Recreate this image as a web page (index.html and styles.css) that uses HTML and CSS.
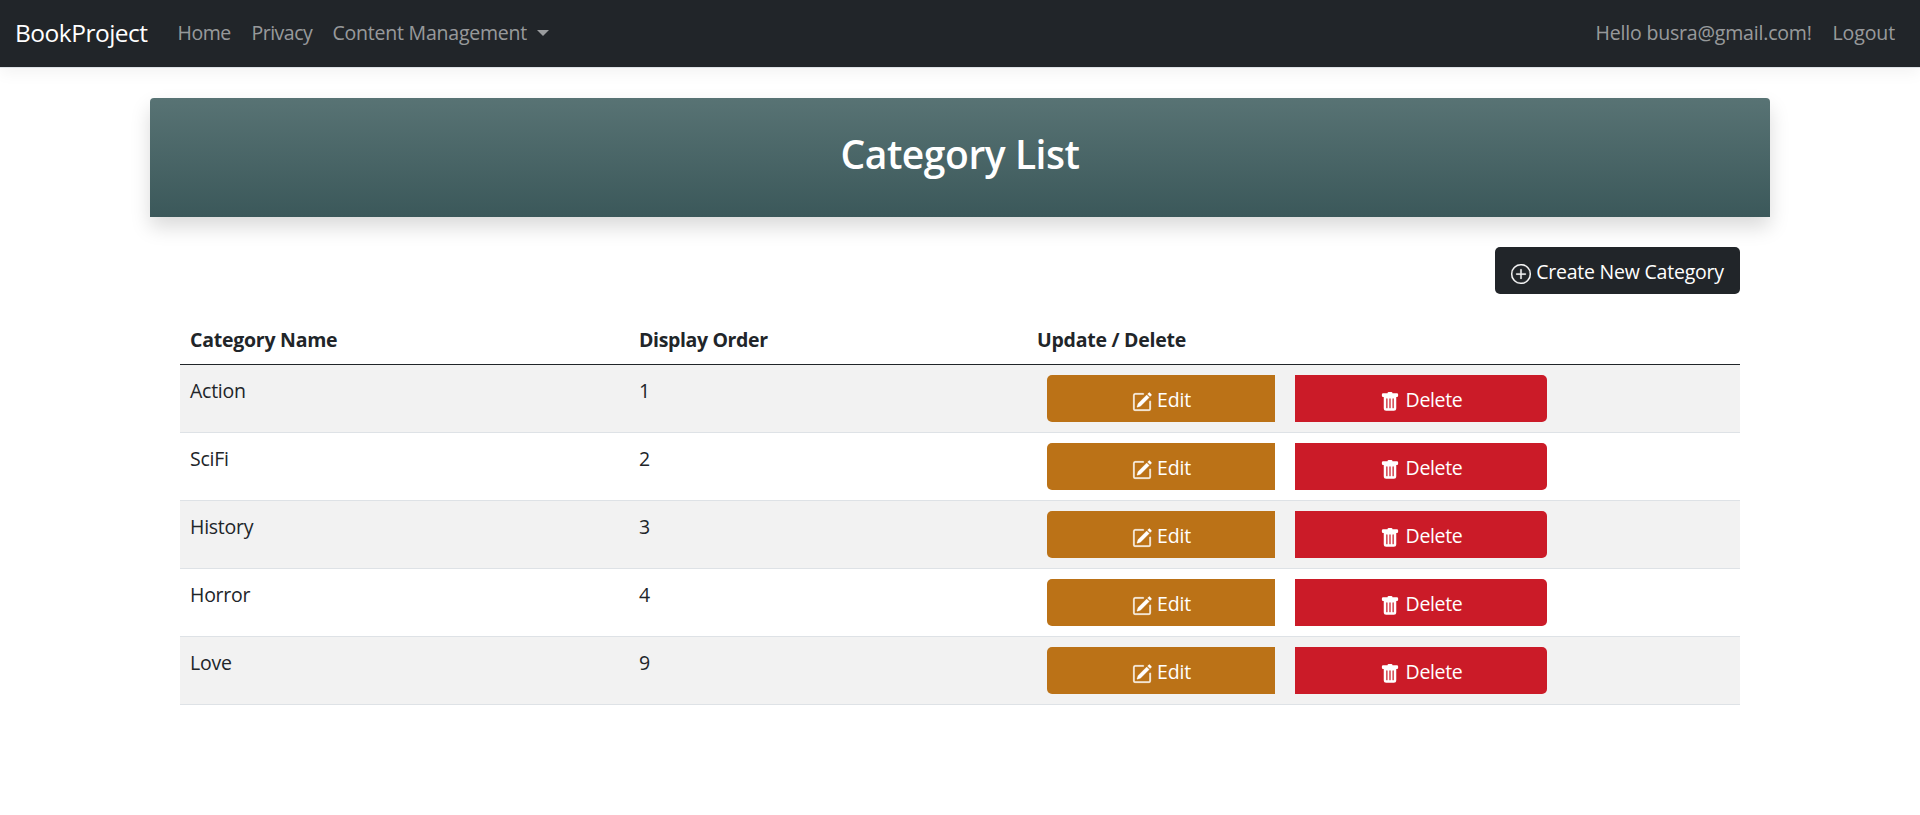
FILE: index.html
```html
<!DOCTYPE html>
<html lang="en">
<head>
<meta charset="utf-8">
<title>Category List - BookProject</title>
<link rel="stylesheet" href="styles.css">
</head>
<body>
<svg class="sprite" aria-hidden="true">
  <symbol id="plus-circle" viewBox="0 0 16 16">
    <path d="M8 15A7 7 0 1 1 8 1a7 7 0 0 1 0 14zm0 1A8 8 0 1 0 8 0a8 8 0 0 0 0 16z"/>
    <path d="M8 4a.5.5 0 0 1 .5.5v3h3a.5.5 0 0 1 0 1h-3v3a.5.5 0 0 1-1 0v-3h-3a.5.5 0 0 1 0-1h3v-3A.5.5 0 0 1 8 4z"/>
  </symbol>
  <symbol id="pencil-square" viewBox="0 0 16 16">
    <path d="M15.502 1.94a.5.5 0 0 1 0 .706L14.459 3.69l-2-2L13.502.646a.5.5 0 0 1 .707 0l1.293 1.293zm-1.75 2.456-2-2L4.939 9.21a.5.5 0 0 0-.121.196l-.805 2.414a.25.25 0 0 0 .316.316l2.414-.805a.5.5 0 0 0 .196-.12l6.813-6.814z"/>
    <path fill-rule="evenodd" d="M1 13.5A1.5 1.5 0 0 0 2.5 15h11a1.5 1.5 0 0 0 1.5-1.5v-6a.5.5 0 0 0-1 0v6a.5.5 0 0 1-.5.5h-11a.5.5 0 0 1-.5-.5v-11a.5.5 0 0 1 .5-.5H9a.5.5 0 0 0 0-1H2.5A1.5 1.5 0 0 0 1 2.5v11z"/>
  </symbol>
  <symbol id="trash-fill" viewBox="0 0 16 16">
    <path d="M2.5 1a1 1 0 0 0-1 1v1a1 1 0 0 0 1 1H3v9a2 2 0 0 0 2 2h6a2 2 0 0 0 2-2V4h.5a1 1 0 0 0 1-1V2a1 1 0 0 0-1-1H10a1 1 0 0 0-1-1H7a1 1 0 0 0-1 1H2.5zm3 4a.5.5 0 0 1 .5.5v7a.5.5 0 0 1-1 0v-7a.5.5 0 0 1 .5-.5zM8 5a.5.5 0 0 1 .5.5v7a.5.5 0 0 1-1 0v-7A.5.5 0 0 1 8 5zm3 .5v7a.5.5 0 0 1-1 0v-7a.5.5 0 0 1 1 0z"/>
  </symbol>
</svg>

<nav class="navbar">
  <a class="brand">BookProject</a>
  <a class="nav-link home">Home</a>
  <a class="nav-link privacy">Privacy</a>
  <a class="nav-link content-menu">Content Management<span class="caret"></span></a>
  <a class="nav-link hello">Hello busra@gmail.com!</a>
  <a class="nav-link logout">Logout</a>
</nav>

<main class="container">
  <header class="card-header"><h1>Category List</h1></header>
  <section class="card-body">
    <div class="toolbar">
      <a class="btn btn-create"><svg class="icon icon-line"><use href="#plus-circle"/></svg><span>Create New Category</span></a>
    </div>
    <table class="table">
      <thead>
        <tr><th class="col-name">Category Name</th><th class="col-order">Display Order</th><th class="col-actions">Update / Delete</th></tr>
      </thead>
      <tbody>
        <tr><td>Action</td><td>1</td><td><div class="actions"><a class="btn btn-edit"><svg class="icon icon-line"><use href="#pencil-square"/></svg><span>Edit</span></a><a class="btn btn-delete"><svg class="icon"><use href="#trash-fill"/></svg><span>Delete</span></a></div></td></tr>
        <tr><td>SciFi</td><td>2</td><td><div class="actions"><a class="btn btn-edit"><svg class="icon icon-line"><use href="#pencil-square"/></svg><span>Edit</span></a><a class="btn btn-delete"><svg class="icon"><use href="#trash-fill"/></svg><span>Delete</span></a></div></td></tr>
        <tr><td>History</td><td>3</td><td><div class="actions"><a class="btn btn-edit"><svg class="icon icon-line"><use href="#pencil-square"/></svg><span>Edit</span></a><a class="btn btn-delete"><svg class="icon"><use href="#trash-fill"/></svg><span>Delete</span></a></div></td></tr>
        <tr><td>Horror</td><td>4</td><td><div class="actions"><a class="btn btn-edit"><svg class="icon icon-line"><use href="#pencil-square"/></svg><span>Edit</span></a><a class="btn btn-delete"><svg class="icon"><use href="#trash-fill"/></svg><span>Delete</span></a></div></td></tr>
        <tr><td>Love</td><td>9</td><td><div class="actions"><a class="btn btn-edit"><svg class="icon icon-line"><use href="#pencil-square"/></svg><span>Edit</span></a><a class="btn btn-delete"><svg class="icon"><use href="#trash-fill"/></svg><span>Delete</span></a></div></td></tr>
      </tbody>
    </table>
  </section>
</main>
</body>
</html>
```
FILE: styles.css
```css
* { box-sizing: border-box; }

body {
  margin: 0;
  background: #fff;
  color: #212529;
  font: 400 19.5px/30px "Open Sans", "Noto Sans", sans-serif;
}

.sprite { display: none; }

/* Navigation bar */
.navbar {
  display: flex;
  align-items: center;
  height: 68px;
  padding: 0 15px 1px;
  background: #212529;
  border-bottom: 1px solid #dee2e6;
  box-shadow: 0 5px 15px rgba(0, 0, 0, .05);
}

.brand {
  width: 152px;
  color: #fff;
  font-size: 24.5px;
  letter-spacing: -.5px;
  line-height: 38px;
  white-space: nowrap;
}

.nav-link {
  padding: 0 9.5px 0 10.5px;
  color: rgba(255, 255, 255, .55);
  white-space: nowrap;
}

.home { width: 74px; letter-spacing: -.45px; }
.privacy { width: 81px; letter-spacing: -.5px; }
.content-menu { display: flex; align-items: center; letter-spacing: -.22px; }
.hello { width: 237px; margin-left: auto; letter-spacing: -.18px; }
.logout { width: 83px; letter-spacing: -.1px; }

.caret {
  margin: -1px 0 0 10px;
  border: 6px solid transparent;
  border-top-color: currentColor;
  border-bottom: 0;
}

/* Page card */
.container { width: 1620px; margin: 30px auto 0; }

.card-header {
  height: 119px;
  padding-top: 32px;
  border-radius: 4px 4px 0 0;
  background: linear-gradient(#587374, #3b585a);
  box-shadow: 0 10px 20px rgba(0, 0, 0, .15);
  text-align: center;
}

.card-header h1 {
  margin: 0;
  color: #fff;
  font-size: 39px;
  font-weight: 600;
  letter-spacing: -.45px;
  line-height: 48px;
}

.card-body { padding: 30px; }

.toolbar { display: flex; justify-content: flex-end; margin-bottom: 20px; }

/* Buttons */
.btn {
  display: flex;
  align-items: center;
  justify-content: center;
  gap: 5px;
  height: 47px;
  padding-top: 3px;
  border-radius: 5px;
  color: #fff;
  white-space: nowrap;
}

.icon { flex: none; width: 20px; height: 20px; margin-top: 4px; fill: currentColor; }

.icon-line { overflow: visible; stroke: currentColor; stroke-width: .25px; }

.btn-create { width: 245px; background: #212529; letter-spacing: -.22px; }
.btn-edit { width: 228px; padding-left: 1px; border-radius: 5px 0 0 5px; background: #bb7217; letter-spacing: -.15px; }
.btn-delete { width: 252px; border-radius: 0 5px 5px 0; background: #cb1b28; letter-spacing: -.35px; gap: 6px; }

.actions { display: flex; gap: 20px; margin-top: -1px; }

/* Category table */
.table { width: 1560px; border-collapse: separate; border-spacing: 0; table-layout: fixed; }

th, td { padding: 11px 0 9px 10px; text-align: left; vertical-align: top; }

th { height: 51px; border-bottom: 1px solid #212529; font-weight: 700; }

td { height: 68px; border-bottom: 1px solid #dee2e6; letter-spacing: -.25px; }

.col-name { width: 449px; letter-spacing: -.25px; }
.col-order { width: 399px; letter-spacing: -.36px; }
.col-actions { padding-left: 9px; letter-spacing: -.25px; }
td:last-child { padding-left: 19px; }

tbody tr:nth-child(odd) { background: #f2f2f2; }
```
